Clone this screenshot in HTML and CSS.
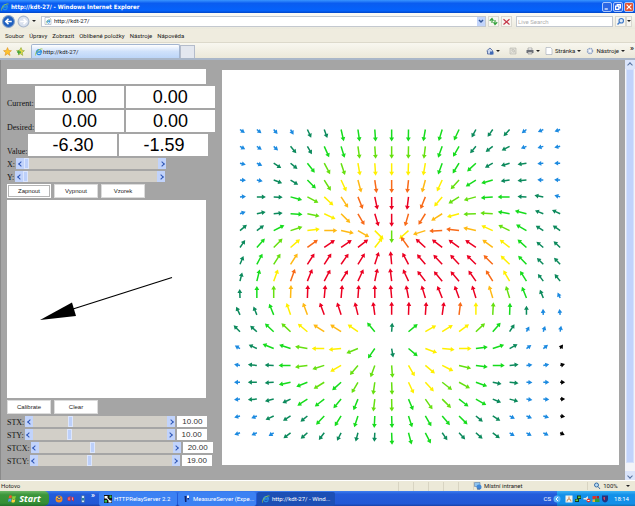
FILE: index.html
```html
<!DOCTYPE html>
<html lang="cs">
  <head>
    <meta charset="UTF-8" />
    <meta name="viewport" content="width=device-width, initial-scale=1.0" />
    <title>http://kdt-27/</title>
    <link rel="stylesheet" href="styles.css" />
  </head>
  <body>
    <!-- shared icons -->
    <svg class="defs" width="0" height="0" aria-hidden="true">
      <symbol id="ie" viewBox="0 0 16 16">
        <path d="M12.500 10.500A5 5 0 1 1 13 8H4" fill="none" stroke="#2a8fe0" stroke-width="2.600" />
        <path d="M1 15C-1 10 9 0 15 2" fill="none" stroke="#9ec93a" stroke-width="1.600" />
      </symbol>
      <symbol id="page" viewBox="0 0 16 16">
        <path d="M2 1h9l3 3v11H2z" fill="#fff" stroke="#8d97a8" />
      </symbol>
    </svg>

    <header class="browser">
      <div class="titlebar">
        <svg class="icon"><use href="#ie" /></svg>
        <span class="title">http://kdt-27/ - Windows Internet Explorer</span>
        <button class="win" aria-label="Minimize"><svg viewBox="0 0 10 10"><path d="M2 7.500h4" /></svg></button>
        <button class="win" aria-label="Restore"><svg viewBox="0 0 10 10"><path d="M4 4V2h4v4H6M2 4h4v4H2z" /></svg></button>
        <button class="win close" aria-label="Close"><svg viewBox="0 0 10 10"><path d="M2 2l6 6M8 2L2 8" /></svg></button>
      </div>

      <div class="navbar">
        <button class="round" aria-label="Back"><svg viewBox="0 0 24 24"><circle cx="12" cy="12" r="11" fill="#1d5fc0" stroke="#8aa4c8" stroke-width="2" /><path d="M18 12H7m5-5l-5 5 5 5" fill="none" stroke="#fff" stroke-width="3" /></svg></button>
        <button class="round" aria-label="Forward"><svg viewBox="0 0 24 24"><circle cx="12" cy="12" r="10" fill="#d9e1ee" stroke="#a9b7cc" stroke-width="2" /><path d="M6 12h11m-5-5l5 5-5 5" fill="none" stroke="#fff" stroke-width="3" /></svg></button>
        <span class="caret"></span>
        <div class="address">
          <svg class="icon"><use href="#page" /></svg>
          <svg class="icon over"><use href="#ie" /></svg>
          <input type="text" aria-label="Address" value="http://kdt-27/" />
          <button class="drop" aria-label="Show addresses"><svg viewBox="0 0 8 8"><path d="M2 3l2 2 2-2" /></svg></button>
        </div>
        <button class="small" aria-label="Refresh"><svg viewBox="0 0 12 12"><path d="M4 8V2M1 5l3-3 2 3M8 4v6M6 7l2 3 3-3" stroke="#35a23c" stroke-width="1.500" fill="none" /></svg></button>
        <button class="small" aria-label="Stop"><svg viewBox="0 0 12 12"><path d="M2 3l8 7M10 3l-8 7" stroke="#c43648" stroke-width="1.500" fill="none" /></svg></button>
        <input class="search" type="text" aria-label="Search" placeholder="Live Search" />
        <button class="small" aria-label="Go"><svg viewBox="0 0 12 12"><circle cx="7" cy="5" r="3" stroke="#3c78c8" stroke-width="1.500" fill="#dceaf8" /><path d="M5 7l-3 3" stroke="#3c78c8" stroke-width="2" /></svg></button>
        <button class="small narrow" aria-label="Search options"><span class="caret"></span></button>
      </div>

      <nav class="menu">
        <button>Soubor</button>
        <button>Úpravy</button>
        <button>Zobrazit</button>
        <button>Oblíbené položky</button>
        <button>Nástroje</button>
        <button>Nápověda</button>
      </nav>

      <div class="tabs">
        <button class="fav" aria-label="Favorites"><svg viewBox="0 0 16 16"><path d="M8 1l2 5 5 .5-4 3.500 1.500 5L8 12l-4.500 3L5 10 1 6.500 6 6z" fill="#ffc52e" stroke="#dd8d1b" /></svg></button>
        <button class="fav" aria-label="Add favorite"><svg viewBox="0 0 16 16"><path d="M9 1l2 5 4 .5-4 3.500 1 5-4-3-4 2 1-4-4-3.500L6 6z" fill="#e5d84c" stroke="#7fa52c" /><path d="M2 9h7M5 6v7" stroke="#35a23c" stroke-width="2" /></svg></button>
        <button class="tab"><svg class="icon"><use href="#ie" /></svg>http://kdt-27/</button>
        <button class="newtab" aria-label="New tab"></button>
        <div class="commands">
          <button aria-label="Home"><svg class="icon" viewBox="0 0 16 16"><path d="M1 8l7-6 5 5v7H3V8" fill="#c9d6ee" stroke="#405a94" stroke-width="1.500" /><path d="M8 9h7v6H8z" fill="#3e69b5" /></svg><span class="caret"></span></button>
          <button aria-label="Feeds"><svg class="icon" viewBox="0 0 16 16"><path d="M2 2h12v12H2z" fill="#e5e3db" stroke="#a5a49c" /><path d="M5 11v-1M5 7a4 4 0 0 1 4 4M5 4a7 7 0 0 1 7 7" fill="none" stroke="#a5a49c" /></svg></button>
          <button aria-label="Print"><svg class="icon" viewBox="0 0 16 16"><path d="M4 2h8v4H4z" fill="#fff" stroke="#777" /><path d="M1 6h14v6H1z" fill="#6c7078" /><path d="M4 10h8v4H4z" fill="#ddd" stroke="#777" /></svg><span class="caret"></span></button>
          <button><svg class="icon"><use href="#page" /></svg>Stránka<span class="caret"></span></button>
          <button><svg class="icon" viewBox="0 0 16 16"><circle cx="8" cy="8" r="5" fill="#f4f6fa" stroke="#8fa3c4" stroke-width="3" stroke-dasharray="3 1" /></svg>Nástroje<span class="caret"></span></button>
          <span class="more">»</span>
        </div>
      </div>
    </header>

    <main class="page">
      <section class="controls">
        <input class="message" type="text" aria-label="Message" />
        <div class="row">
          <label for="current-x">Current:</label>
          <input class="big" id="current-x" type="text" value="0.00" />
          <input class="big" type="text" aria-label="Current Y" value="0.00" />
        </div>
        <div class="row">
          <label for="desired-x">Desired:</label>
          <input class="big" id="desired-x" type="text" value="0.00" />
          <input class="big" type="text" aria-label="Desired Y" value="0.00" />
        </div>
        <div class="row">
          <label for="value-x">Value:</label>
          <input class="big" id="value-x" type="text" value="-6.30" />
          <input class="big" type="text" aria-label="Value Y" value="-1.59" />
        </div>
        <div class="row">
          <label for="x">X:</label>
          <div class="slider"><button aria-label="Less"></button><input id="x" type="range" value="0" /><button class="next" aria-label="More"></button></div>
        </div>
        <div class="row">
          <label for="y">Y:</label>
          <div class="slider"><button aria-label="Less"></button><input id="y" type="range" value="0" /><button class="next" aria-label="More"></button></div>
        </div>
        <div class="buttons">
          <button class="focused">Zapnout</button>
          <button>Vypnout</button>
          <button>Vzorek</button>
        </div>
        <svg class="vector" viewBox="0 0 199 198" role="img" aria-label="Vector">
          <path d="M165 77.500L66 109" stroke="#000" stroke-width="1.300" />
          <path d="M33 120L65 102.500 69 116z" />
        </svg>
        <div class="buttons">
          <button>Calibrate</button>
          <button>Clear</button>
        </div>
        <div class="row">
          <label for="stx">STX:</label>
          <div class="slider"><button aria-label="Less"></button><input id="stx" type="range" value="27" /><button class="next" aria-label="More"></button></div>
          <input class="num" type="text" aria-label="STX value" value="10.00" />
        </div>
        <div class="row">
          <label for="sty">STY:</label>
          <div class="slider"><button aria-label="Less"></button><input id="sty" type="range" value="27" /><button class="next" aria-label="More"></button></div>
          <input class="num" type="text" aria-label="STY value" value="10.00" />
        </div>
        <div class="row">
          <label for="stcx">STCX:</label>
          <div class="slider"><button aria-label="Less"></button><input id="stcx" type="range" value="40" /><button class="next" aria-label="More"></button></div>
          <input class="num" type="text" aria-label="STCX value" value="20.00" />
        </div>
        <div class="row">
          <label for="stcy">STCY:</label>
          <div class="slider"><button aria-label="Less"></button><input id="stcy" type="range" value="38" /><button class="next" aria-label="More"></button></div>
          <input class="num" type="text" aria-label="STCY value" value="19.00" />
        </div>
      </section>
      <section class="plot">
        <svg id="field" viewBox="0 0 397 395" role="img" aria-label="Vector field"></svg>
      </section>
      <div class="scrollbar">
        <button class="up" aria-label="Scroll up"></button>
        <div class="thumb"></div>
        <button class="down" aria-label="Scroll down"></button>
      </div>
    </main>

    <footer class="status">
      <span class="state">Hotovo</span>
      <span class="cell"></span><span class="cell"></span><span class="cell"></span><span class="cell"></span><span class="cell"></span>
      <span class="zone"><svg class="icon" viewBox="0 0 16 16"><path d="M1 1h11v8H1z" fill="#8fc4ee" stroke="#506f9c" /><circle cx="10" cy="10" r="5" fill="#3f87d8" /><path d="M6 14h6" stroke="#506f9c" stroke-width="2" /></svg>Místní intranet</span>
      <button class="zoom"><svg class="icon" viewBox="0 0 16 16"><circle cx="7" cy="6" r="4" fill="#b9dcf5" stroke="#3a6ea5" stroke-width="2" /><path d="M10 9l4 5" stroke="#3a6ea5" stroke-width="2" /></svg>100%<span class="caret"></span></button>
    </footer>

    <footer class="taskbar">
      <button class="start"><svg viewBox="0 0 16 16"><path d="M2 3q3-2 5 0L6 8Q4 6 1 8z" fill="#f0572a" /><path d="M8 3q3 2 6 0l-1 5q-3 2-6 0z" fill="#8bd03a" /><path d="M1 9q3-2 5 0l-1 5q-2-2-5 0z" fill="#4c9cf5" /><path d="M7 9q3 2 6 0l-1 5q-3 2-6 0z" fill="#ffd23c" /></svg>Start</button>
      <div class="quick">
        <button aria-label="Firefox"><svg class="icon" viewBox="0 0 16 16"><circle cx="8" cy="8" r="7" fill="#f08a1f" /><circle cx="8" cy="6" r="4" fill="#3a55a8" /><path d="M2 4q5 0 6 4l4-3" fill="none" stroke="#ffd04a" stroke-width="2" /></svg></button>
        <button aria-label="Opera"><svg class="icon" viewBox="0 0 16 16"><path d="M1 5l6-3v11l-6-2zM9 3l5 2v8l-5-3z" fill="#d8303a" /><path d="M4 5v5M11 5v5" stroke="#fff" /></svg></button>
        <button aria-label="Desktop"><svg class="icon" viewBox="0 0 16 16"><path d="M5 1h6v14H5z" fill="#cfe6f4" stroke="#214a8c" /><path d="M6 6h4v5H6z" fill="#2b7f9c" /></svg></button>
        <span class="more">»</span>
      </div>
      <button class="task"><svg class="icon" viewBox="0 0 16 16"><path d="M0 0h16v16H0z" fill="#111" /><path d="M1 2h6v4l5 5h3v4H9v-4L5 7H1z" fill="#fff" /><path d="M11 1h4v5h-4zM1 10h5v5H1z" fill="#39b54a" /></svg><span>HTTPRelayServer 2.2</span></button>
      <button class="task"><svg class="icon" viewBox="0 0 16 16"><path d="M3 2h4v12H4z" fill="#10246e" /><path d="M8 1h4v5H8z" fill="#fff" /><path d="M9 6h3v3H9z" fill="#10246e" /></svg><span>MeasureServer (Expe...</span></button>
      <button class="task active"><svg class="icon"><use href="#ie" /></svg><span>http://kdt-27/ - Wind...</span></button>
      <span class="lang">CS</span>
      <div class="tray">
        <svg class="icon chevron" viewBox="0 0 16 16"><circle cx="8" cy="8" r="7" fill="#5cb4f8" /><path d="M10 4L6 8l4 4" fill="none" stroke="#fff" stroke-width="2" /></svg>
        <svg class="icon" viewBox="0 0 16 16"><path d="M1 1h14v14H1z" fill="#f2f2ea" /><path d="M8 3v5M4 13q0-5 4-5t4 5" fill="none" stroke="#c98b55" stroke-width="2" /></svg>
        <svg class="icon" viewBox="0 0 16 16"><path d="M6 1h8v7H6zM2 8h8v6H2z" fill="#163b1e" /><path d="M8 3h5v3H8zM3 9h5v3H3z" fill="#66cf3d" /></svg>
        <svg class="icon" viewBox="0 0 16 16"><path d="M1 6h4l5-4v11l-5-4H1z" fill="#dfe3e8" /><circle cx="11" cy="11" r="4" fill="#e23a2e" /><path d="M9 11h4" stroke="#fff" stroke-width="2" /></svg>
        <svg class="icon" viewBox="0 0 16 16"><path d="M1 2h8v6H1z" fill="#e03427" /><path d="M6 7h9v7H6z" fill="#2f9c3b" /><path d="M1 9h5v5H1z" fill="#e9b52e" /><path d="M10 2h4v5h-4z" fill="#b3222a" /></svg>
        <svg class="icon" viewBox="0 0 16 16"><path d="M2 1h12v7q0 5-6 7-6-2-6-7z" fill="#24337e" /><path d="M5 4h3v7q-3-2-3-4z" fill="#d84558" /></svg>
        <span class="clock">18:14</span>
      </div>
    </footer>
    <script src="script.js"></script>
  </body>
</html>
```
FILE: styles.css
```css
* {
  box-sizing: border-box;
}
body {
  display: flex;
  flex-direction: column;
  min-height: 100vh;
  margin: 0;
  background: #a5a5a5;
  color: #222;
  font-family: Roboto, 'Liberation Sans', sans-serif;
  font-size: 6px;
  line-height: 8px;
}
button,
input {
  margin: 0;
  padding: 0;
  border: 0;
  border-radius: 0;
  outline: none;
  background: none;
  color: inherit;
  font: inherit;
}
button {
  display: flex;
  align-items: center;
  justify-content: center;
  white-space: nowrap;
}
svg {
  display: block;
  flex: none;
}
.defs {
  position: absolute;
}
.icon {
  width: 8px;
  height: 8px;
}
.caret {
  border: 2px solid transparent;
  border-top-color: #222;
  border-bottom: 0;
}

/* Title bar */
.titlebar {
  display: flex;
  align-items: center;
  gap: 1px;
  height: 13px;
  padding: 0 1px;
  background: linear-gradient(#3a95ff, #0a5cf0 25%, #0562fb 80%, #0347c8);
  color: #fff;
}
.title {
  flex: 1;
  padding-left: 1px;
  font-family: 'DejaVu Sans Condensed', 'DejaVu Sans', sans-serif;
  font-weight: 700;
}
.win {
  width: 10px;
  height: 10px;
  border: 1px solid #a9c6fa;
  border-radius: 2px;
  background: #2c66e4;
}
.win svg {
  width: 8px;
  height: 8px;
  fill: none;
  stroke: #fff;
  stroke-width: 1.5;
}
.close {
  background: #e2532f;
}

/* Address bar */
.navbar {
  display: flex;
  align-items: center;
  gap: 2px;
  height: 16px;
  padding: 0 3px 0 2px;
  background: linear-gradient(#fbfaf5, #ebe9dd);
}
.round {
  width: 13px;
  height: 13px;
}
.round svg {
  width: 13px;
  height: 13px;
}
.round + .caret {
  margin-right: 3px;
}
.address {
  display: flex;
  flex: 1;
  align-items: center;
  height: 11px;
  padding-left: 2px;
  border: 1px solid #c3c8cf;
  background: #fff;
}
.over {
  width: 5px;
  height: 5px;
  margin-left: -6px;
}
.address input {
  flex: 1;
  min-width: 0;
  padding-left: 3px;
}
.drop {
  width: 8px;
  height: 9px;
  background: #c3d5fb;
}
.drop svg {
  width: 8px;
  height: 8px;
  fill: none;
  stroke: #34579b;
  stroke-width: 1.5;
}
.small {
  width: 11px;
  height: 11px;
  border: 1px solid #d9d8d0;
  background: #f7f6f1;
}
.small svg {
  width: 9px;
  height: 9px;
}
.narrow {
  width: 6px;
  margin-left: -2px;
}
.search {
  width: 97px;
  height: 11px;
  margin-left: 2px;
  padding-left: 1px;
  border: 1px solid #c3c8cf;
  background: #fff;
}
.search::placeholder {
  color: #b0b0b0;
  opacity: 1;
}

/* Menu */
.menu {
  display: flex;
  align-items: center;
  gap: 5px;
  height: 13px;
  padding-left: 5px;
  background: #efecdf;
}

/* Tabs */
.tabs {
  display: flex;
  align-items: flex-end;
  height: 18px;
  padding-left: 2px;
  border-top: 1px solid #dcd9cb;
  border-bottom: 2px solid #a9b6c8;
  background: linear-gradient(#f8f7f0, #ebe8d9);
}
.fav {
  width: 10px;
  height: 13px;
  margin-right: 3px;
}
.fav svg {
  width: 9px;
  height: 9px;
}
.tab {
  justify-content: flex-start;
  width: 149px;
  height: 14px;
  margin-left: 3px;
  padding-left: 3px;
  border: 1px solid #a3b5d0;
  border-bottom: 0;
  border-radius: 2px 2px 0 0;
  background: linear-gradient(#fff, #cfe1fb 50%, #bcd5f8);
}
.newtab {
  width: 15px;
  height: 13px;
  border: 1px solid #b4bccb;
  border-bottom: 0;
  background: #e3e7ef;
}
.commands {
  display: flex;
  align-items: center;
  gap: 5px;
  height: 14px;
  margin-left: auto;
  padding-right: 1px;
}
.commands button {
  gap: 2px;
}
.commands button:first-child,
.commands button:nth-child(2) {
  margin-right: 4px;
}
.more {
  align-self: flex-start;
  font-size: 8px;
  font-weight: 700;
}

/* Page */
.page {
  display: flex;
  flex: 1;
  align-items: flex-start;
  padding-left: 6px;
  border-left: 1px solid #8a8a8a;
  background: #a5a5a5;
}
.controls {
  display: flex;
  flex: none;
  flex-direction: column;
  align-items: flex-start;
  gap: 2px;
  width: 215px;
  padding-top: 9px;
  font-family: 'Liberation Sans', Arial, sans-serif;
}
.message {
  width: 199px;
  height: 15px;
  background: #fff;
}
.row {
  display: flex;
  align-items: flex-end;
  gap: 2px;
}
.row label {
  margin-right: -1px;
  color: #111;
  font-family: 'Liberation Serif', 'Times New Roman', serif;
  font-size: 8px;
}
.big {
  width: 89px;
  height: 22px;
  background: #fff;
  color: #000;
  font-size: 18px;
  line-height: 22px;
  text-align: center;
}
.slider {
  display: flex;
  width: 150px;
  height: 11px;
  background: #d2cfc8;
}
.slider button {
  width: 8px;
  height: 11px;
  background: #c1d3fb;
}
.slider button::before {
  content: '';
  width: 3px;
  height: 3px;
  margin-left: 1px;
  border: solid #2d55b5;
  border-width: 0 0 1px 1px;
  transform: rotate(45deg);
}
.slider .next::before {
  margin: 0 1px 0 0;
  transform: rotate(225deg);
}
.slider input {
  flex: 1;
  min-width: 0;
  height: 11px;
  appearance: none;
}
.slider input::-webkit-slider-thumb {
  width: 5px;
  height: 11px;
  border: 1px solid #dce6fd;
  background: #bdd0fa;
  appearance: none;
}
.num {
  width: 30px;
  height: 11px;
  background: #fff;
  color: #333;
  font-size: 8px;
  text-align: center;
}
.buttons {
  display: flex;
  gap: 3px;
}
.buttons button {
  width: 44px;
  height: 14px;
  background: #fff;
  box-shadow: 0 0 0 1px #dcdcdc inset;
}
.buttons .focused {
  border: 1px solid #fff;
  box-shadow: 0 0 0 1px #b5b5b5 inset;
}
.vector {
  width: 199px;
  background: #fff;
}
.plot {
  flex: 1;
  margin: 10px 6px 0 0;
  background: #fff;
}
.plot svg {
  width: 100%;
}
.scrollbar {
  display: flex;
  flex-direction: column;
  align-self: stretch;
  width: 10px;
  background: #f3f4f8;
}
.scrollbar button {
  height: 9px;
  background: #dbe5fb;
}
.scrollbar button::before {
  content: '';
  width: 3px;
  height: 3px;
  border: solid #55709f;
  border-width: 1px 0 0 1px;
  transform: rotate(45deg);
}
.scrollbar .down::before {
  transform: rotate(225deg);
}
.thumb {
  flex: 1;
  margin: 0 1px 8px;
  border: 1px solid #d5e1fb;
  background: #c1d3fb;
}

/* Status bar */
.status {
  display: flex;
  align-items: center;
  height: 11px;
  border-top: 1px solid #fff;
  background: #ece9d8;
}
.state {
  flex: 1;
  padding-left: 1px;
}
.cell {
  width: 15px;
  height: 9px;
  border-left: 1px solid #d8d4c2;
}
.zone {
  display: flex;
  align-items: center;
  gap: 2px;
  width: 114px;
  border-left: 1px solid #d8d4c2;
}
.zoom {
  gap: 2px;
  width: 48px;
  border-left: 1px solid #d8d4c2;
}
.zoom .caret {
  margin-left: 6px;
}

/* Taskbar */
.taskbar {
  display: flex;
  align-items: stretch;
  height: 15px;
  background: linear-gradient(#3f80f0, #245ddb 20%, #2158d6 85%, #1941a5);
  color: #fff;
}
.start {
  gap: 2px;
  width: 49px;
  border-radius: 0 5px 5px 0;
  background: linear-gradient(#6db868, #3c963b 25%, #358f35 80%, #22712a);
  font-family: 'Open Sans', sans-serif;
  font-size: 9px;
  font-style: italic;
  font-weight: 700;
}
.start svg {
  width: 9px;
  height: 9px;
}
.quick {
  display: flex;
  align-items: center;
  gap: 4px;
  width: 50px;
  padding-left: 6px;
}
.task {
  justify-content: flex-start;
  gap: 2px;
  width: 78px;
  margin: 1px 1px 0 0;
  padding-left: 5px;
  border-radius: 2px;
  background: #3c81f3;
}
.active {
  background: #1c4fb5;
}
.lang {
  margin-left: auto;
  padding: 4px 6px 0 0;
}
.tray {
  display: flex;
  align-items: center;
  gap: 1px;
  padding-right: 6px;
  background: linear-gradient(#3fb4f5, #1290e9 25%, #138fe8 85%, #1070b5);
}
.chevron {
  margin: 0 3px 0 -4px;
}
.clock {
  padding-left: 4px;
}
```
FILE: script.js
```js
const svgNs = 'http://www.w3.org/2000/svg';
const field = document.getElementById('field');

// color and length of an arrow for every magnitude band
const bands = {
  k: { color: '#000000', size: 5 },
  b: { color: '#1c8ae0', size: 6 },
  t: { color: '#0c8a5c', size: 9 },
  g: { color: '#16dc1c', size: 12 },
  l: { color: '#66e010', size: 12.5 },
  y: { color: '#fff000', size: 12.5 },
  o: { color: '#ffb914', size: 13 },
  r: { color: '#f86a18', size: 13 },
  R: { color: '#ec0022', size: 13 },
};

// direction in degrees (clockwise from the x axis) and band
const rows = [
  '36b 40b 50b 60b 65t 70t 77g 82g 86g 90g 91g 100g 107g 115g 118t 125t 132t 142b 155b 160b',
  '30b 35b 43b 50t 60t 66g 73g 82l 86l 90l 91l 97l 110g 120g 130t 142t 152t 158b 165b 168b',
  '15b 25b 33t 40t 52g 62l 72l 80y 86y 90y 92y 100y 110g 122g 137g 150t 163t 172t 175b 180b',
  '3b 12b 20t 32t 45g 58l 65y 75o 82r 90r 96r 105o 115y 132l 148g 164g 172t 176t 182b 184b',
  '-5b 0t 3t 15g 28l 43y 57o 68r 78R 90R 97R 112r 130y 148l 165l 175g 180g 183t 190t 195b',
  '-20b -12t -5t 3g 12l 25y 45o 60r 73R 90R 106r 122r 148o 165y 178l 184l 190g 195g 202t 205t',
  '-40t -37t -27g -18l -7y 0o 12o 30o 45y 90l 138y 162o 178r 187r 193o 204y 206l 210g 213t 215t',
  '-55t -48g -45l -41y -36r -35R -35R -38R -52y 0- -126r -138R -142R -144R -145R -143o -142y -138g -140t -137t',
  '-67t -62g -57l -57o -57R -57R -55R -58R -72R -95R -118R -130R -133R -133R -135R -135r -136y -134g -135t -133t',
  '-76t -76g -70y -70r -68R -62R -58R -65R -78R -97R -115R -128R -130R -131R -125R -122r -120y -122g -127t -128t',
  '-92t -90g -90l -88o -88R -85R -85R -86R -90R -95R -101R -107R -112R -110R -107R -107o -107l -112g -112t -115b',
  '-115t -112t -112g -109y -110o -110R -108R -104R -98R -90R -88R -86R -82R -83r -90y -87l -88g -90t -93b -97b',
  '-135t -138t -137g -137l -140y -147o -147o -145y -130g -86t -40g -30y -32y -37y -43l -49g -57t -62b -72b -80b',
  '-150b -155t -158g -162g -170l 180y 175y 158l 125g 80t 40g 20y 5y 0y -8g -18g -28t -35b -38b -55k',
  '-170b -175t -177t 180g 172l 162l 150y 130l 110l 86l 60y 40y 27y 14l 8g 0g -5t -7b -10b -15k',
  '180b 180t 176t 168g 158g 148l 138g 120l 98l 88l 65y 47y 38l 29l 20g 12t 7t 3b 0b 0k',
  '174b 176t 166t 155t 147g 142g 130g 112g 97l 89l 67g 55l 45l 38g 30g 22t 15t 8b 5b 0k',
  '165b 158b 155t 147t 140t 133g 122g 108g 93g 88g 72g 60g 50g 45g 40t 33t 28b 22b 18b 10k',
  '160b 155b 148b 142t 138t 127t 117t 105t 93t 88g 75g 63g 55t 47t 42t 38t 33b 30b 28b 25k',
];

const drawArrow = (x, y, angle, band) => {
  const { color, size } = bands[band];
  const arrow = document.createElementNS(svgNs, 'path');
  const neck = size - 4;
  arrow.setAttribute(
    'd',
    `M0-.75H${neck}V-2.4L${size} 0 ${neck} 2.4V.75H0z`
  );
  arrow.setAttribute('fill', color);
  arrow.setAttribute('transform', `translate(${x} ${y}) rotate(${angle})`);
  field.appendChild(arrow);
};

rows.forEach((row, j) => {
  row.split(' ').forEach((cell, i) => {
    const band = cell.slice(-1);
    if (bands[band]) {
      drawArrow(18 + i * 16.85, 59.5 + j * 16.85, parseInt(cell), band);
    }
  });
});
```
